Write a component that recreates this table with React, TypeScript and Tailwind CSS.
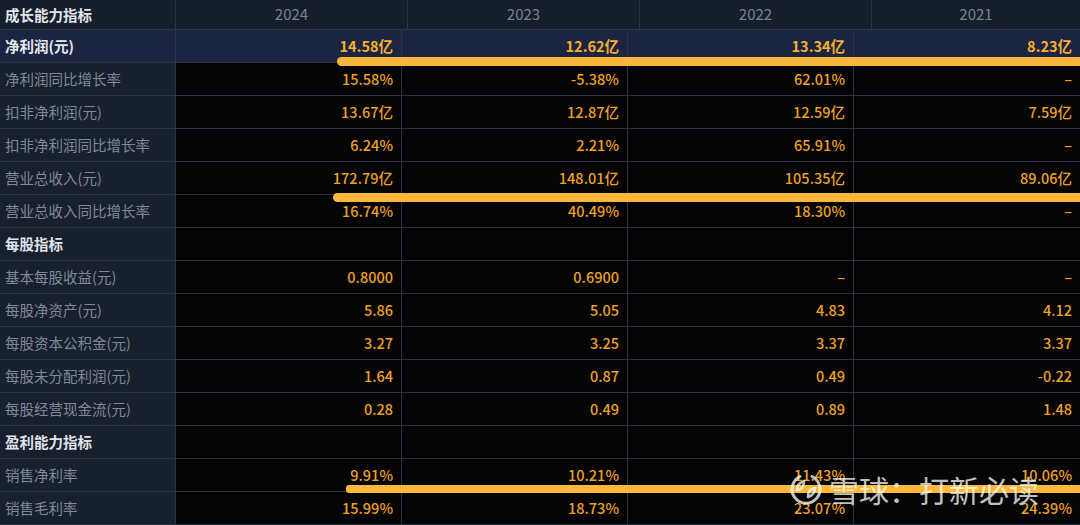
import React from "react";

const FONT = { fontFamily: '"Noto Sans CJK SC", "Noto Sans", sans-serif' };

type Row = {
  label: string;
  values?: string[];
  section?: boolean; // 每股指标 같은 소제목 행
  highlight?: boolean;
};

const YEARS = ["2024", "2023", "2022", "2021"];

const ROWS: Row[] = [
  { label: "净利润(元)", values: ["14.58亿", "12.62亿", "13.34亿", "8.23亿"], highlight: true },
  { label: "净利润同比增长率", values: ["15.58%", "-5.38%", "62.01%", "–"] },
  { label: "扣非净利润(元)", values: ["13.67亿", "12.87亿", "12.59亿", "7.59亿"] },
  { label: "扣非净利润同比增长率", values: ["6.24%", "2.21%", "65.91%", "–"] },
  { label: "营业总收入(元)", values: ["172.79亿", "148.01亿", "105.35亿", "89.06亿"] },
  { label: "营业总收入同比增长率", values: ["16.74%", "40.49%", "18.30%", "–"] },
  { label: "每股指标", section: true },
  { label: "基本每股收益(元)", values: ["0.8000", "0.6900", "–", "–"] },
  { label: "每股净资产(元)", values: ["5.86", "5.05", "4.83", "4.12"] },
  { label: "每股资本公积金(元)", values: ["3.27", "3.25", "3.37", "3.37"] },
  { label: "每股未分配利润(元)", values: ["1.64", "0.87", "0.49", "-0.22"] },
  { label: "每股经营现金流(元)", values: ["0.28", "0.49", "0.89", "1.48"] },
  { label: "盈利能力指标", section: true },
  { label: "销售净利率", values: ["9.91%", "10.21%", "11.43%", "10.06%"] },
  { label: "销售毛利率", values: ["15.99%", "18.73%", "23.07%", "24.39%"] },
];

function Watermark() {
  return (
    <div className="pointer-events-none absolute left-[788px] top-[471px] flex items-center gap-[5px] text-white/75">
      <svg width="36" height="36" viewBox="0 0 36 36" fill="none">
        <path
          d="M12 5.5 A14 14 0 1 0 24 5.5"
          stroke="currentColor"
          strokeWidth="3"
          strokeLinecap="round"
        />
        <path
          d="M9 19 C9 13 13 11 16 10 C16 16 13 19 9 19 Z"
          stroke="currentColor"
          strokeWidth="2.6"
          strokeLinejoin="round"
        />
        <path
          d="M27 17 C27 23 23 25 20 26 C20 20 23 17 27 17 Z"
          stroke="currentColor"
          strokeWidth="2.6"
          strokeLinejoin="round"
        />
      </svg>
      <span className="text-[30px] leading-none" style={FONT}>
        雪球：打新必读
      </span>
    </div>
  );
}

export default function App() {
  return (
    <div className="relative h-[525px] w-[1080px] overflow-hidden bg-[#050505]" style={FONT}>
      {/* 헤더 행 - 본문과 열 폭이 조금 다름 */}
      <div className="grid h-[30px] grid-cols-[175px_232px_232px_232px_1fr] border-b border-[#2d3647] bg-[#171e2b]">
        <div className="flex items-center pl-[5px] text-[14.5px] font-bold text-[#e3e6ec]">成长能力指标</div>
        {YEARS.map((y) => (
          <div
            key={y}
            className="flex items-center justify-center border-l border-[#2d3647] text-[15px] text-[#778195]"
          >
            {y}
          </div>
        ))}
      </div>

      {ROWS.map((r) => (
        <div
          key={r.label}
          className={
            "grid h-[33px] grid-cols-[175px_226px_226px_226px_1fr] border-b border-[#2a3344] " +
            (r.highlight ? "bg-[#1b2440]" : "")
          }
        >
          <div
            className={
              "flex items-center pl-[5px] text-[14.5px] " +
              (r.highlight
                ? "font-bold text-[#e6e9ef]"
                : r.section
                ? "bg-[#18202e] font-bold text-[#e0e4ea]"
                : "bg-[#18202e] text-[#7f899a]")
            }
          >
            {r.label}
          </div>
          {[0, 1, 2, 3].map((i) => (
            <div
              key={i}
              className={
                "flex items-center justify-end border-l border-[#2a3344] pr-[8px] text-[14.5px] " +
                (r.highlight ? "font-bold text-[#f7b02e]" : "font-medium text-[#eea126]")
              }
            >
              {r.values ? r.values[i] : ""}
            </div>
          ))}
        </div>
      ))}

      {/* 노란 형광펜 줄 */}
      <div className="absolute left-[337px] right-0 top-[57px] h-[9px] rounded-l-full bg-[#fbb73a]" />
      <div className="absolute left-[333px] right-0 top-[193px] h-[9px] rounded-l-full bg-[#fbb73a]" />
      <div className="absolute left-[346px] right-0 top-[485px] h-[8px] rounded-l-[3px] bg-[#fbb73a]" />

      <Watermark />
    </div>
  );
}
